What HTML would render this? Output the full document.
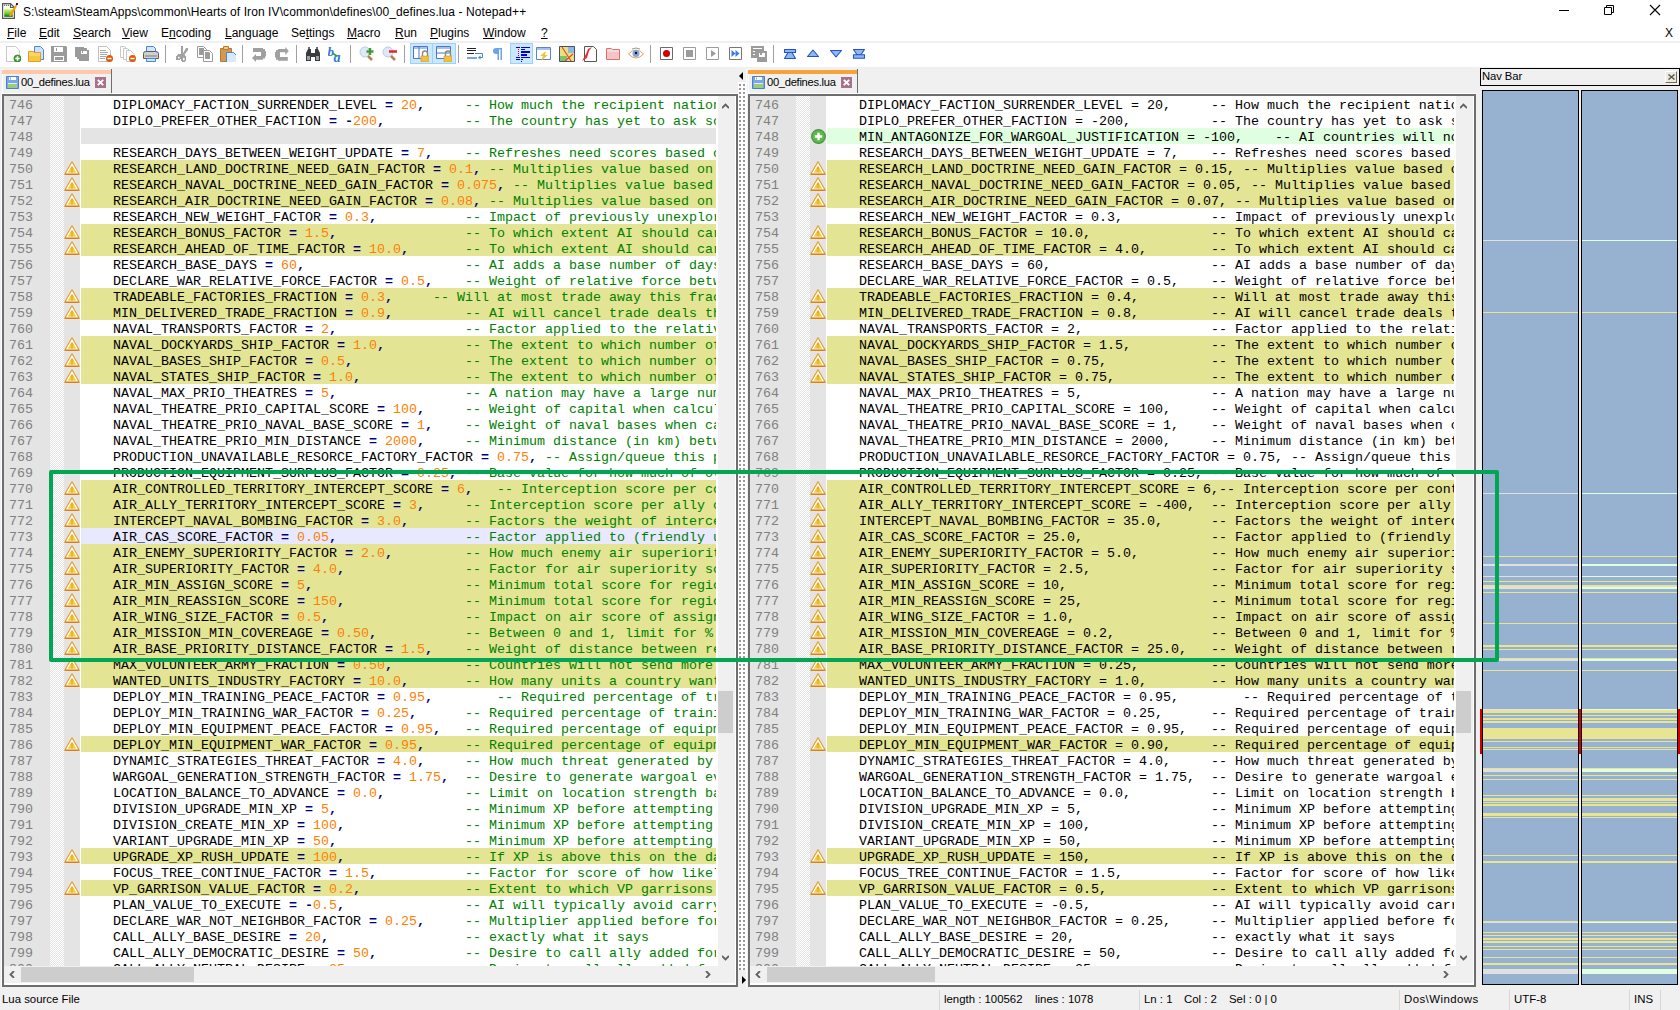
<!DOCTYPE html><html><head><meta charset="utf-8"><style>*{margin:0;padding:0;box-sizing:border-box}
html,body{width:1680px;height:1010px;overflow:hidden;background:#fff;position:relative;font-family:"Liberation Sans",sans-serif}
.a{position:absolute}
.ui{position:absolute;font-family:"Liberation Sans",sans-serif;font-size:12px;color:#000;white-space:pre;line-height:14px}
.menu u{text-decoration:underline;text-underline-offset:1px;text-decoration-thickness:1px}
.st2{font-size:11.4px}
.frame{position:absolute;border:2px solid #6e6e6e}
.lnm{position:absolute;background:#e4e4e4}
.hatch{position:absolute;background-color:#fff;background-image:linear-gradient(45deg,#e4e4e4 25%,transparent 25%,transparent 75%,#e4e4e4 75%),linear-gradient(45deg,#e4e4e4 25%,transparent 25%,transparent 75%,#e4e4e4 75%);background-size:2px 2px;background-position:0 0,1px 1px}
.clip{position:absolute;overflow:hidden;background:#fff}
.row{position:absolute;left:1px;right:0;height:16px}
.row.y{background:#e4e495}
.row.g{background:#e4e4e4}
.row.a{background:#e0ffe0}
.row.cur{background:#e8e8ff}
.t{position:absolute;left:32px;top:2px;font-family:"Liberation Mono",monospace;font-size:13.333px;line-height:16px;white-space:pre;color:#000}
.t i{font-style:normal}
.t .n{color:#ff8000}
.t .c{color:#008000}
.t .o{color:#000080;font-weight:bold}
.nums{position:absolute;font-family:"Liberation Mono",monospace;font-size:13.333px;line-height:16px;white-space:pre;color:#808080}
.sb{position:absolute;background:#f0f0f0}
.nav{position:absolute;background:#97b1d1;border:1px solid #000}
.st{position:absolute;height:1px}
</style></head><body><!-- title bar -->
<div class="a" style="left:0;top:0;width:1680px;height:41px;background:#fff"></div>
<div class="ui" style="left:23px;top:5px;font-size:12px;letter-spacing:0.09px">S:\steam\SteamApps\common\Hearts of Iron IV\common\defines\00_defines.lua - Notepad++</div>
<!-- menu -->
<div class="ui menu" style="left:7px;top:26px"><u>F</u>ile</div>
<div class="ui menu" style="left:39px;top:26px"><u>E</u>dit</div>
<div class="ui menu" style="left:73px;top:26px"><u>S</u>earch</div>
<div class="ui menu" style="left:122px;top:26px"><u>V</u>iew</div>
<div class="ui menu" style="left:161px;top:26px">E<u>n</u>coding</div>
<div class="ui menu" style="left:225px;top:26px"><u>L</u>anguage</div>
<div class="ui menu" style="left:291px;top:26px">Se<u>t</u>tings</div>
<div class="ui menu" style="left:347px;top:26px"><u>M</u>acro</div>
<div class="ui menu" style="left:395px;top:26px"><u>R</u>un</div>
<div class="ui menu" style="left:430px;top:26px"><u>P</u>lugins</div>
<div class="ui menu" style="left:483px;top:26px"><u>W</u>indow</div>
<div class="ui menu" style="left:541px;top:26px"><u>?</u></div>
<div class="ui" style="left:1665px;top:26px">X</div>
<div class="a" style="left:0;top:41px;width:1680px;height:2px;background:#f0f0f0"></div>
<!-- toolbar -->
<div class="a" style="left:0;top:43px;width:1680px;height:24px;background:#fff"></div>
<svg class="a" style="left:5px;top:46px" width="16" height="16" viewBox="0 0 16 16"><path d="M1.5 0.5h9l4 4v11h-13z" fill="#fff" stroke="#c8c8c8"/><circle cx="12.5" cy="12.5" r="3.6" fill="#3c9a2e" stroke="#2a7a1f" stroke-width=".6"/><path d="M12.5 10.3v4.4M10.3 12.5h4.4" stroke="#fff" stroke-width="1.6"/></svg><svg class="a" style="left:28px;top:46px" width="16" height="16" viewBox="0 0 16 16"><path d="M6.5 .5h6l3 3v10h-9z" fill="#cfe2fb" stroke="#4a86d8"/><path d="M.5 5.5h5l1 1h6v9h-12z" fill="#f9d46a" stroke="#e49a2a"/><path d="M1 10h11v5h-11z" fill="#f6c83a"/></svg><svg class="a" style="left:51px;top:46px" width="16" height="16" viewBox="0 0 16 16"><path d="M0 0h15l1 1v15h-16z" fill="#9b9b9b"/><path d="M3 1h9v5h-9z" fill="#fff"/><path d="M5 2h1v3h-1z" fill="#9b9b9b"/><path d="M3 10h10v5h-10z" fill="#fff"/><path d="M4 11h8v3h-8z" fill="#9b9b9b"/></svg><svg class="a" style="left:74px;top:46px" width="16" height="16" viewBox="0 0 16 16"><path d="M1 1h9v10h-9z" fill="#9b9b9b"/><path d="M3 2h10v11h-10z" fill="#9b9b9b"/><path d="M5 4h10v11h-10z" fill="#9b9b9b"/><path d="M7 5h6v3h-6z" fill="#fff"/><path d="M8 5h1v2h-1z" fill="#9b9b9b"/></svg><svg class="a" style="left:97px;top:46px" width="16" height="16" viewBox="0 0 16 16"><path d="M1.5 0.5h8l4 4v11h-12z" fill="#fff" stroke="#c0c0c0"/><path d="M3 4.5h6M3 6.5h8M3 8.5h7M3 10.5h6M3 12.5h5" stroke="#a8a8a8" stroke-width="1"/><circle cx="12.5" cy="12.5" r="3.5" fill="#e2570b"/><path d="M10.5 12.5h4" stroke="#fff" stroke-width="1.5"/></svg><svg class="a" style="left:120px;top:46px" width="16" height="16" viewBox="0 0 16 16"><path d="M0.5 0.5h4l4 4v7h-8z" fill="#fff" stroke="#c8c8c8"/><path d="M3.5 2.5h4l4 4v7h-8z" fill="#fff" stroke="#c8c8c8"/><path d="M6.5 4.5h4l4 4v7h-8z" fill="#fff" stroke="#c8c8c8"/><circle cx="12.5" cy="12.5" r="3.5" fill="#e2570b"/><path d="M10.5 12.5h4" stroke="#fff" stroke-width="1.5"/></svg><svg class="a" style="left:143px;top:46px" width="16" height="16" viewBox="0 0 16 16"><path d="M3.5 .5h7l2 2v5h-9z" fill="#d2e5fb" stroke="#4a86d8"/><path d="M.5 7.5q0-2 2-2h10q3 0 3 2v5h-15z" fill="#cfcfcf" stroke="#5a5a5a"/><path d="M2 9h12v2h-12z" fill="#a6a6a6"/><path d="M3.5 12.5h9v3h-9z" fill="#d2e5fb" stroke="#4a86d8"/></svg><svg class="a" style="left:172px;top:44px" width="20" height="20" viewBox="0 0 20 20"><g fill="#a0a0a0"><rect x="9" y="2" width="2" height="9"/><path d="M14 4h2v2l-4.5 6h-2z"/><path d="M6 10H10V11H13V12H14V17H13V18H10V17H9V15H8V16H4V12H5V11H6Z"/></g><rect x="6" y="12.8" width="1.6" height="1.6" fill="#fff"/><rect x="11" y="13.8" width="1.5" height="2.6" fill="#fff"/></svg><svg class="a" style="left:197px;top:46px" width="16" height="16" viewBox="0 0 16 16"><path d="M0.5 0.5h6l3 3v8h-9z" fill="#fff" stroke="#9b9b9b"/><path d="M2 2h5v7h-5z" fill="#9b9b9b"/><path d="M6.5 4.5h6l3 3v8h-9z" fill="#fff" stroke="#9b9b9b"/><path d="M8 6h4l1 1v6h-5z" fill="#9b9b9b"/></svg><svg class="a" style="left:220px;top:46px" width="16" height="16" viewBox="0 0 16 16"><path d="M.5 2.5h11v13h-11z" fill="#d09a55" stroke="#b57a33"/><path d="M3.5 .5h5v3h-5z" fill="#f0c878" stroke="#b57a33"/><path d="M6.5 6.5h7l3 3v7h-10z" fill="#dbe9fc" stroke="#4a86d8"/></svg><svg class="a" style="left:249px;top:44px" width="20" height="20" viewBox="0 0 20 20"><path d="M4 4H14V5H16V7H17V12.6H16V14.6H14V15.8H7V18L3 14L7 10V12H12V8H4Z" fill="#a0a0a0"/></svg><svg class="a" style="left:272px;top:44px" width="20" height="20" viewBox="0 0 20 20"><path d="M13.3 3L16.8 7L13.3 11V8.3H8V13H15.8V16.8H6V15.8H4V13.6H3V8H4V6H6V5H13.3Z" fill="#a0a0a0"/></svg><svg class="a" style="left:305px;top:46px" width="16" height="16" viewBox="0 0 16 16"><path d="M1 7l2-4h3v12h-5z M15 7l-2-4h-3v12h5z" fill="#3b3b3b"/><path d="M6 7h4v4h-4z" fill="#3b3b3b"/><path d="M3 1h2v2h-2z M11 1h2v2h-2z" fill="#6c6c6c"/><path d="M2 10h3v4h-3z M11 10h3v4h-3z" fill="#9aa0a8"/></svg><svg class="a" style="left:328px;top:46px" width="16" height="16" viewBox="0 0 16 16"><text x="-0.5" y="9.5" font-family="Liberation Serif" font-style="italic" font-weight="bold" font-size="13" fill="#2f79db">b</text><text x="5.5" y="16" font-family="Liberation Serif" font-style="italic" font-weight="bold" font-size="14" fill="#2f79db">a</text><path d="M5 7.5l4.5 3" stroke="#3a9a3a" stroke-width="1.6"/></svg><svg class="a" style="left:359px;top:46px" width="16" height="16" viewBox="0 0 16 16"><circle cx="6" cy="6" r="5" fill="#dde9f7" stroke="#b9cde6"/><path d="M9 10l4 4" stroke="#b5834c" stroke-width="2.5"/><path d="M11 2v7M7.5 5.5h7" stroke="#3f9a35" stroke-width="2.5"/></svg><svg class="a" style="left:382px;top:46px" width="16" height="16" viewBox="0 0 16 16"><circle cx="6" cy="6" r="5" fill="#dde9f7" stroke="#b9cde6"/><path d="M9 10l4 4" stroke="#b5834c" stroke-width="2.5"/><path d="M7 5.5h8" stroke="#e8202a" stroke-width="2.5"/></svg><div class="a" style="left:410px;top:43px;width:23px;height:21px;background:#cce8ff;border:1px solid #99d1ff"></div><div class="a" style="left:432px;top:43px;width:24px;height:21px;border-left-width:2px;background:#cce8ff;border:1px solid #99d1ff"></div><svg class="a" style="left:413px;top:46px" width="16" height="16" viewBox="0 0 16 16"><path d="M.5 .5h14v12h-14z" fill="#fff" stroke="#4c74c8"/><path d="M1 1h13v2h-13z" fill="#a9c1ea"/><path d="M6 1v12" stroke="#4c74c8"/><path d="M9.5 10v-2.5q0-2.5 2.5-2.5t2.5 2.5v2.5" fill="none" stroke="#8a8a8a" stroke-width="1.4"/><path d="M8 10h8v6h-8z" fill="#f0c040" stroke="#d09a20" stroke-width=".6"/></svg><svg class="a" style="left:436px;top:46px" width="16" height="16" viewBox="0 0 16 16"><path d="M.5 .5h14v12h-14z" fill="#fff" stroke="#4c74c8"/><path d="M1 1h13v2h-13z" fill="#a9c1ea"/><path d="M1 7h13" stroke="#4c74c8"/><path d="M9.5 10v-2.5q0-2.5 2.5-2.5t2.5 2.5v2.5" fill="none" stroke="#8a8a8a" stroke-width="1.4"/><path d="M8 10h8v6h-8z" fill="#f0c040" stroke="#d09a20" stroke-width=".6"/></svg><svg class="a" style="left:467px;top:46px" width="16" height="16" viewBox="0 0 16 16"><path d="M0 2.5h9M0 4.5h9M0 7.5h7" stroke="#222" stroke-width="1"/><path d="M8 7.5h7.5v4h-3" fill="none" stroke="#4c84d8" stroke-width="1"/><path d="M11 11.5l2.5-2v4z" fill="#4c84d8"/><path d="M0 11h10v2h-10z" fill="#79a8ea"/></svg><svg class="a" style="left:490px;top:46px" width="16" height="16" viewBox="0 0 16 16"><path d="M6 2h6v12h-1.5v-10.5h-1.5v10.5h-1.5v-6h-1.5q-3 0-3-3t3-3z" fill="#6fa2e8"/></svg><div class="a" style="left:510px;top:43px;width:23px;height:21px;background:#cce8ff;border:1px solid #99d1ff"></div><svg class="a" style="left:512px;top:45px" width="18" height="18" viewBox="0 0 18 18"><g fill="#0000e0"><rect x="4" y="2" width="4" height="1"/><rect x="9" y="2" width="9" height="1"/><rect x="9" y="4" width="4" height="1"/><rect x="9" y="6" width="9" height="2"/><rect x="9" y="9" width="6" height="2"/><rect x="4" y="12" width="4" height="1"/><rect x="9" y="12" width="9" height="1"/><rect x="4" y="14" width="4" height="1"/><rect x="9" y="14" width="2" height="1"/><rect x="9" y="16" width="1" height="1"/></g><g fill="#e00000"><rect x="6" y="4" width="1" height="1"/><rect x="6" y="6" width="1" height="1"/><rect x="6" y="8" width="1" height="1"/><rect x="6" y="10" width="1" height="1"/></g></svg><svg class="a" style="left:536px;top:46px" width="16" height="16" viewBox="0 0 16 16"><path d="M.5 1.5h14v12h-14z" fill="#fff" stroke="#5b83c9"/><path d="M1 2h13v2h-13z" fill="#a9c1ea"/><path d="M10 5l-6 5h3l-2 5 7-6h-3z" fill="#f2c23a"/></svg><svg class="a" style="left:559px;top:46px" width="16" height="16" viewBox="0 0 16 16"><path d="M.5 .5h15v15h-15z" fill="#e9e27a" stroke="#4d4d6a"/><path d="M9 1h6v6h-6z" fill="#8fb8e8"/><path d="M1 10h7v5h-7z" fill="#7cc46a"/><path d="M3 1l9 14M6 15l8-7" stroke="#e2473a" stroke-width="1.2"/></svg><svg class="a" style="left:582px;top:46px" width="16" height="16" viewBox="0 0 16 16"><path d="M2.5 .5h9l3 3v12h-12z" fill="#fff" stroke="#555"/><path d="M0 15l4-7 2-5 4-2-3 4-2 7z" fill="#e43030"/></svg><svg class="a" style="left:606px;top:46px" width="16" height="16" viewBox="0 0 16 16"><path d="M.5 2.5h5l1 1h7v10h-13z" fill="#f7d9d9" stroke="#d87070"/><path d="M1 6h12v7h-12z" fill="#f2c4c4"/></svg><svg class="a" style="left:628px;top:46px" width="16" height="16" viewBox="0 0 16 16"><path d="M.5 8q7.5-8 15 0q-7.5 8-15 0z" fill="#fff" stroke="#e0a060"/><circle cx="8" cy="7.5" r="3.5" fill="#7fa8df"/><circle cx="8" cy="7" r="1.2" fill="#111"/><path d="M4 3q4-2 8 0" stroke="#999" fill="none"/></svg><svg class="a" style="left:659px;top:45px" width="16" height="16" viewBox="0 0 16 16"><path d="M1.5 2.5h12v12h-12z" fill="#fff" stroke="#6a6a6a"/><circle cx="7.5" cy="8.5" r="3.5" fill="#d00000"/></svg><svg class="a" style="left:682px;top:45px" width="16" height="16" viewBox="0 0 16 16"><path d="M1.5 2.5h12v12h-12z" fill="#fff" stroke="#9b9b9b"/><path d="M4 5h7v7h-7z" fill="#9b9b9b"/></svg><svg class="a" style="left:705px;top:45px" width="16" height="16" viewBox="0 0 16 16"><path d="M1.5 2.5h12v12h-12z" fill="#fff" stroke="#9b9b9b"/><path d="M6 5l5 3.5-5 3.5z" fill="#9b9b9b"/></svg><svg class="a" style="left:728px;top:45px" width="16" height="16" viewBox="0 0 16 16"><path d="M1.5 2.5h12v12h-12z" fill="#fff" stroke="#777"/><path d="M3.5 5l4 3.5-4 3.5z M7.5 5l4 3.5-4 3.5z" fill="#3d7ce0"/></svg><svg class="a" style="left:751px;top:46px" width="16" height="16" viewBox="0 0 16 16"><path d="M0 0h13v12h-13z" fill="#9b9b9b"/><path d="M2 2h9v1h-9z M2 5h2v1h-2z M2 8h2v1h-2z" fill="#fff"/><path d="M6 5h10v11h-10z" fill="#9b9b9b"/><path d="M8 7h6v4h-6z" fill="#fff"/><path d="M9 7h2v2h-2z" fill="#9b9b9b"/></svg><svg class="a" style="left:783px;top:46px" width="14" height="16" viewBox="0 0 14 16"><path d="M1.5 3.5h11v3h-11z" fill="#93b6ee" stroke="#1f55cc" stroke-width="1.1" stroke-linejoin="round"/><path d="M5 6.5h4l3.5 6h-11z" fill="#93b6ee" stroke="#1f55cc" stroke-width="1.1" stroke-linejoin="round"/></svg><svg class="a" style="left:806px;top:46px" width="14" height="16" viewBox="0 0 14 16"><path d="M7 4l5.5 6.5h-11z" fill="#93b6ee" stroke="#1f55cc" stroke-width="1.1" stroke-linejoin="round"/></svg><svg class="a" style="left:829px;top:46px" width="14" height="16" viewBox="0 0 14 16"><path d="M1.5 4.5h11l-5.5 6.5z" fill="#93b6ee" stroke="#1f55cc" stroke-width="1.1" stroke-linejoin="round"/></svg><svg class="a" style="left:852px;top:46px" width="14" height="16" viewBox="0 0 14 16"><path d="M1.5 3.5h11l-3.5 5.3h-4z" fill="#93b6ee" stroke="#1f55cc" stroke-width="1.1" stroke-linejoin="round"/><path d="M1.5 8.8h11v3.5h-11z" fill="#93b6ee" stroke="#1f55cc" stroke-width="1.1" stroke-linejoin="round"/></svg><div class="a" style="left:165px;top:45px;width:1px;height:18px;background:#a0a0a0"></div><div class="a" style="left:242px;top:45px;width:1px;height:18px;background:#a0a0a0"></div><div class="a" style="left:296px;top:45px;width:1px;height:18px;background:#a0a0a0"></div><div class="a" style="left:350px;top:45px;width:1px;height:18px;background:#a0a0a0"></div><div class="a" style="left:404px;top:45px;width:1px;height:18px;background:#a0a0a0"></div><div class="a" style="left:458px;top:45px;width:1px;height:18px;background:#a0a0a0"></div><div class="a" style="left:650px;top:45px;width:1px;height:18px;background:#a0a0a0"></div><div class="a" style="left:773px;top:45px;width:1px;height:18px;background:#a0a0a0"></div>
<!-- gray area -->
<div class="a" style="left:0;top:67px;width:1680px;height:943px;background:#f0f0f0"></div>
<!-- tabs -->
<div class="a" style="left:2px;top:69px;width:110px;height:25px;background:#f0f0f0;border-right:1px solid #6e6e6e;border-left:1px solid #fff"></div><div class="a" style="left:2px;top:70px;width:109px;height:4px;background:#ffc8a8"></div><svg class="a" style="left:6px;top:76px" width="13" height="13" viewBox="0 0 13 13"><path d="M.5 .5h12v12h-12z" fill="#7aa7e6" stroke="#4a7fd0"/><path d="M3 1h7v3h-7z" fill="#fff"/><path d="M4 1.5h1v2h-1z" fill="#7aa7e6"/><path d="M2 8h9v4h-9z" fill="#9ccc78"/><path d="M2 7h9v1h-9z" fill="#dfeaf8"/></svg><div class="ui" style="left:21px;top:75px;font-size:11.2px;letter-spacing:-0.3px">00_defines.lua</div><svg class="a" style="left:95px;top:77px" width="11" height="11" viewBox="0 0 11 11"><path d="M0 0h11v11h-11z" fill="#a6728c"/><path d="M2.8 2.8l5.4 5.4M8.2 2.8l-5.4 5.4" stroke="#fff" stroke-width="1.9"/></svg><div class="a" style="left:748px;top:69px;width:110px;height:25px;background:#f0f0f0;border-right:1px solid #6e6e6e;border-left:1px solid #fff"></div><div class="a" style="left:748px;top:70px;width:109px;height:4px;background:#faa23a"></div><svg class="a" style="left:752px;top:76px" width="13" height="13" viewBox="0 0 13 13"><path d="M.5 .5h12v12h-12z" fill="#7aa7e6" stroke="#4a7fd0"/><path d="M3 1h7v3h-7z" fill="#fff"/><path d="M4 1.5h1v2h-1z" fill="#7aa7e6"/><path d="M2 8h9v4h-9z" fill="#9ccc78"/><path d="M2 7h9v1h-9z" fill="#dfeaf8"/></svg><div class="ui" style="left:767px;top:75px;font-size:11.2px;letter-spacing:-0.3px">00_defines.lua</div><svg class="a" style="left:841px;top:77px" width="11" height="11" viewBox="0 0 11 11"><path d="M0 0h11v11h-11z" fill="#a6728c"/><path d="M2.8 2.8l5.4 5.4M8.2 2.8l-5.4 5.4" stroke="#fff" stroke-width="1.9"/></svg>
<!-- left frame -->
<div class="frame" style="left:2px;top:94px;width:736px;height:893px"></div>
<div class="lnm" style="left:4px;top:96px;width:76px;height:870px"></div>
<div class="hatch" style="left:50px;top:96px;width:14px;height:870px"></div>
<div class="a" style="left:80px;top:96px;width:638px;height:870px;background:#fff"></div><div class="clip" style="left:80px;top:96px;width:636px;height:870px"><div class="row " style="top:0px"><div class="t">DIPLOMACY_FACTION_SURRENDER_LEVEL <b class="o">=</b> <i class="n">20</i><b class="o">,</b>     <i class="c">-- How much the recipient nation losing</i></div></div><div class="row " style="top:16px"><div class="t">DIPLO_PREFER_OTHER_FACTION <b class="o">=</b> <b class="o">-</b><i class="n">200</i><b class="o">,</b>          <i class="c">-- The country has yet to ask some</i></div></div><div class="row g" style="top:32px"><div class="t"></div></div><div class="row " style="top:48px"><div class="t">RESEARCH_DAYS_BETWEEN_WEIGHT_UPDATE <b class="o">=</b> <i class="n">7</i><b class="o">,</b>    <i class="c">-- Refreshes need scores based on</i></div></div><div class="row y" style="top:64px"><div class="t">RESEARCH_LAND_DOCTRINE_NEED_GAIN_FACTOR <b class="o">=</b> <i class="n">0.1</i><b class="o">,</b> <i class="c">-- Multiplies value based on relative</i></div></div><div class="row y" style="top:80px"><div class="t">RESEARCH_NAVAL_DOCTRINE_NEED_GAIN_FACTOR <b class="o">=</b> <i class="n">0.075</i><b class="o">,</b> <i class="c">-- Multiplies value based on</i></div></div><div class="row y" style="top:96px"><div class="t">RESEARCH_AIR_DOCTRINE_NEED_GAIN_FACTOR <b class="o">=</b> <i class="n">0.08</i><b class="o">,</b> <i class="c">-- Multiplies value based on rel</i></div></div><div class="row " style="top:112px"><div class="t">RESEARCH_NEW_WEIGHT_FACTOR <b class="o">=</b> <i class="n">0.3</i><b class="o">,</b>           <i class="c">-- Impact of previously unexplored</i></div></div><div class="row y" style="top:128px"><div class="t">RESEARCH_BONUS_FACTOR <b class="o">=</b> <i class="n">1.5</i><b class="o">,</b>                <i class="c">-- To which extent AI should care</i></div></div><div class="row y" style="top:144px"><div class="t">RESEARCH_AHEAD_OF_TIME_FACTOR <b class="o">=</b> <i class="n">10.0</i><b class="o">,</b>       <i class="c">-- To which extent AI should care</i></div></div><div class="row " style="top:160px"><div class="t">RESEARCH_BASE_DAYS <b class="o">=</b> <i class="n">60</i><b class="o">,</b>                    <i class="c">-- AI adds a base number of days</i></div></div><div class="row " style="top:176px"><div class="t">DECLARE_WAR_RELATIVE_FORCE_FACTOR <b class="o">=</b> <i class="n">0.5</i><b class="o">,</b>    <i class="c">-- Weight of relative force between</i></div></div><div class="row y" style="top:192px"><div class="t">TRADEABLE_FACTORIES_FRACTION <b class="o">=</b> <i class="n">0.3</i><b class="o">,</b>     <i class="c">-- Will at most trade away this fraction</i></div></div><div class="row y" style="top:208px"><div class="t">MIN_DELIVERED_TRADE_FRACTION <b class="o">=</b> <i class="n">0.9</i><b class="o">,</b>         <i class="c">-- AI will cancel trade deals that</i></div></div><div class="row " style="top:224px"><div class="t">NAVAL_TRANSPORTS_FACTOR <b class="o">=</b> <i class="n">2</i><b class="o">,</b>                <i class="c">-- Factor applied to the relative</i></div></div><div class="row y" style="top:240px"><div class="t">NAVAL_DOCKYARDS_SHIP_FACTOR <b class="o">=</b> <i class="n">1.0</i><b class="o">,</b>          <i class="c">-- The extent to which number of</i></div></div><div class="row y" style="top:256px"><div class="t">NAVAL_BASES_SHIP_FACTOR <b class="o">=</b> <i class="n">0.5</i><b class="o">,</b>              <i class="c">-- The extent to which number of</i></div></div><div class="row y" style="top:272px"><div class="t">NAVAL_STATES_SHIP_FACTOR <b class="o">=</b> <i class="n">1.0</i><b class="o">,</b>             <i class="c">-- The extent to which number of</i></div></div><div class="row " style="top:288px"><div class="t">NAVAL_MAX_PRIO_THEATRES <b class="o">=</b> <i class="n">5</i><b class="o">,</b>                <i class="c">-- A nation may have a large number</i></div></div><div class="row " style="top:304px"><div class="t">NAVAL_THEATRE_PRIO_CAPITAL_SCORE <b class="o">=</b> <i class="n">100</i><b class="o">,</b>     <i class="c">-- Weight of capital when calculating</i></div></div><div class="row " style="top:320px"><div class="t">NAVAL_THEATRE_PRIO_NAVAL_BASE_SCORE <b class="o">=</b> <i class="n">1</i><b class="o">,</b>    <i class="c">-- Weight of naval bases when calc</i></div></div><div class="row " style="top:336px"><div class="t">NAVAL_THEATRE_PRIO_MIN_DISTANCE <b class="o">=</b> <i class="n">2000</i><b class="o">,</b>     <i class="c">-- Minimum distance (in km) between</i></div></div><div class="row " style="top:352px"><div class="t">PRODUCTION_UNAVAILABLE_RESORCE_FACTORY_FACTOR <b class="o">=</b> <i class="n">0.75</i><b class="o">,</b> <i class="c">-- Assign/queue this production</i></div></div><div class="row " style="top:368px"><div class="t">PRODUCTION_EQUIPMENT_SURPLUS_FACTOR <b class="o">=</b> <i class="n">0.25</i><b class="o">,</b> <i class="c">-- Base value for how much of over</i></div></div><div class="row y" style="top:384px"><div class="t">AIR_CONTROLLED_TERRITORY_INTERCEPT_SCORE <b class="o">=</b> <i class="n">6</i><b class="o">,</b>   <i class="c">-- Interception score per controlled</i></div></div><div class="row y" style="top:400px"><div class="t">AIR_ALLY_TERRITORY_INTERCEPT_SCORE <b class="o">=</b> <i class="n">3</i><b class="o">,</b>     <i class="c">-- Interception score per ally controlled</i></div></div><div class="row y" style="top:416px"><div class="t">INTERCEPT_NAVAL_BOMBING_FACTOR <b class="o">=</b> <i class="n">3.0</i><b class="o">,</b>       <i class="c">-- Factors the weight of intercepting</i></div></div><div class="row cur" style="top:432px"><div class="t">AIR_CAS_SCORE_FACTOR <b class="o">=</b> <i class="n">0.05</i><b class="o">,</b>                <i class="c">-- Factor applied to (friendly unit</i></div></div><div class="row y" style="top:448px"><div class="t">AIR_ENEMY_SUPERIORITY_FACTOR <b class="o">=</b> <i class="n">2.0</i><b class="o">,</b>         <i class="c">-- How much enemy air superiority</i></div></div><div class="row y" style="top:464px"><div class="t">AIR_SUPERIORITY_FACTOR <b class="o">=</b> <i class="n">4.0</i><b class="o">,</b>               <i class="c">-- Factor for air superiority score</i></div></div><div class="row y" style="top:480px"><div class="t">AIR_MIN_ASSIGN_SCORE <b class="o">=</b> <i class="n">5</i><b class="o">,</b>                   <i class="c">-- Minimum total score for region</i></div></div><div class="row y" style="top:496px"><div class="t">AIR_MIN_REASSIGN_SCORE <b class="o">=</b> <i class="n">150</i><b class="o">,</b>               <i class="c">-- Minimum total score for region</i></div></div><div class="row y" style="top:512px"><div class="t">AIR_WING_SIZE_FACTOR <b class="o">=</b> <i class="n">0.5</i><b class="o">,</b>                 <i class="c">-- Impact on air score of assigning</i></div></div><div class="row y" style="top:528px"><div class="t">AIR_MISSION_MIN_COVEREAGE <b class="o">=</b> <i class="n">0.50</i><b class="o">,</b>           <i class="c">-- Between 0 and 1, limit for % of</i></div></div><div class="row y" style="top:544px"><div class="t">AIR_BASE_PRIORITY_DISTANCE_FACTOR <b class="o">=</b> <i class="n">1.5</i><b class="o">,</b>    <i class="c">-- Weight of distance between region</i></div></div><div class="row y" style="top:560px"><div class="t">MAX_VOLUNTEER_ARMY_FRACTION <b class="o">=</b> <i class="n">0.50</i><b class="o">,</b>         <i class="c">-- Countries will not send more than</i></div></div><div class="row y" style="top:576px"><div class="t">WANTED_UNITS_INDUSTRY_FACTORY <b class="o">=</b> <i class="n">10.0</i><b class="o">,</b>       <i class="c">-- How many units a country wants</i></div></div><div class="row " style="top:592px"><div class="t">DEPLOY_MIN_TRAINING_PEACE_FACTOR <b class="o">=</b> <i class="n">0.95</i><b class="o">,</b>        <i class="c">-- Required percentage of training</i></div></div><div class="row " style="top:608px"><div class="t">DEPLOY_MIN_TRAINING_WAR_FACTOR <b class="o">=</b> <i class="n">0.25</i><b class="o">,</b>      <i class="c">-- Required percentage of training</i></div></div><div class="row " style="top:624px"><div class="t">DEPLOY_MIN_EQUIPMENT_PEACE_FACTOR <b class="o">=</b> <i class="n">0.95</i><b class="o">,</b>   <i class="c">-- Required percentage of equipment</i></div></div><div class="row y" style="top:640px"><div class="t">DEPLOY_MIN_EQUIPMENT_WAR_FACTOR <b class="o">=</b> <i class="n">0.95</i><b class="o">,</b>     <i class="c">-- Required percentage of equipment</i></div></div><div class="row " style="top:656px"><div class="t">DYNAMIC_STRATEGIES_THREAT_FACTOR <b class="o">=</b> <i class="n">4.0</i><b class="o">,</b>     <i class="c">-- How much threat generated by</i></div></div><div class="row " style="top:672px"><div class="t">WARGOAL_GENERATION_STRENGTH_FACTOR <b class="o">=</b> <i class="n">1.75</i><b class="o">,</b>  <i class="c">-- Desire to generate wargoal every</i></div></div><div class="row " style="top:688px"><div class="t">LOCATION_BALANCE_TO_ADVANCE <b class="o">=</b> <i class="n">0.0</i><b class="o">,</b>          <i class="c">-- Limit on location strength balance</i></div></div><div class="row " style="top:704px"><div class="t">DIVISION_UPGRADE_MIN_XP <b class="o">=</b> <i class="n">5</i><b class="o">,</b>                <i class="c">-- Minimum XP before attempting to</i></div></div><div class="row " style="top:720px"><div class="t">DIVISION_CREATE_MIN_XP <b class="o">=</b> <i class="n">100</i><b class="o">,</b>               <i class="c">-- Minimum XP before attempting to</i></div></div><div class="row " style="top:736px"><div class="t">VARIANT_UPGRADE_MIN_XP <b class="o">=</b> <i class="n">50</i><b class="o">,</b>                <i class="c">-- Minimum XP before attempting to</i></div></div><div class="row y" style="top:752px"><div class="t">UPGRADE_XP_RUSH_UPDATE <b class="o">=</b> <i class="n">100</i><b class="o">,</b>               <i class="c">-- If XP is above this on the daily</i></div></div><div class="row " style="top:768px"><div class="t">FOCUS_TREE_CONTINUE_FACTOR <b class="o">=</b> <i class="n">1.5</i><b class="o">,</b>           <i class="c">-- Factor for score of how likely</i></div></div><div class="row y" style="top:784px"><div class="t">VP_GARRISON_VALUE_FACTOR <b class="o">=</b> <i class="n">0.2</i><b class="o">,</b>             <i class="c">-- Extent to which VP garrisons are</i></div></div><div class="row " style="top:800px"><div class="t">PLAN_VALUE_TO_EXECUTE <b class="o">=</b> <b class="o">-</b><i class="n">0.5</i><b class="o">,</b>               <i class="c">-- AI will typically avoid carrying</i></div></div><div class="row " style="top:816px"><div class="t">DECLARE_WAR_NOT_NEIGHBOR_FACTOR <b class="o">=</b> <i class="n">0.25</i><b class="o">,</b>     <i class="c">-- Multiplier applied before force</i></div></div><div class="row " style="top:832px"><div class="t">CALL_ALLY_BASE_DESIRE <b class="o">=</b> <i class="n">20</i><b class="o">,</b>                 <i class="c">-- exactly what it says</i></div></div><div class="row " style="top:848px"><div class="t">CALL_ALLY_DEMOCRATIC_DESIRE <b class="o">=</b> <i class="n">50</i><b class="o">,</b>           <i class="c">-- Desire to call ally added for</i></div></div><div class="row " style="top:864px"><div class="t">CALL_ALLY_NEUTRAL_DESIRE <b class="o">=</b> <i class="n">25</i><b class="o">,</b>              <i class="c">-- Desire to call ally added for</i></div></div></div>
<div class="nums" style="left:9px;top:98px;height:868px;overflow:hidden">746
747
748
749
750
751
752
753
754
755
756
757
758
759
760
761
762
763
764
765
766
767
768
769
770
771
772
773
774
775
776
777
778
779
780
781
782
783
784
785
786
787
788
789
790
791
792
793
794
795
796
797
798
799
800</div>
<div class="sb" style="left:718px;top:96px;width:17px;height:887px"></div>
<div class="sb" style="left:4px;top:966px;width:714px;height:17px"></div>
<!-- right frame -->
<div class="frame" style="left:748px;top:94px;width:728px;height:893px"></div>
<div class="lnm" style="left:750px;top:96px;width:76px;height:870px"></div>
<div class="hatch" style="left:796px;top:96px;width:14px;height:870px"></div>
<div class="a" style="left:826px;top:96px;width:630px;height:870px;background:#fff"></div><div class="clip" style="left:826px;top:96px;width:628px;height:870px"><div class="row " style="top:0px"><div class="t">DIPLOMACY_FACTION_SURRENDER_LEVEL = 20,     -- How much the recipient nation losing</div></div><div class="row " style="top:16px"><div class="t">DIPLO_PREFER_OTHER_FACTION = -200,          -- The country has yet to ask some</div></div><div class="row a" style="top:32px"><div class="t">MIN_ANTAGONIZE_FOR_WARGOAL_JUSTIFICATION = -100,    -- AI countries will not</div></div><div class="row " style="top:48px"><div class="t">RESEARCH_DAYS_BETWEEN_WEIGHT_UPDATE = 7,    -- Refreshes need scores based on</div></div><div class="row y" style="top:64px"><div class="t">RESEARCH_LAND_DOCTRINE_NEED_GAIN_FACTOR = 0.15, -- Multiplies value based on relative</div></div><div class="row y" style="top:80px"><div class="t">RESEARCH_NAVAL_DOCTRINE_NEED_GAIN_FACTOR = 0.05, -- Multiplies value based on</div></div><div class="row y" style="top:96px"><div class="t">RESEARCH_AIR_DOCTRINE_NEED_GAIN_FACTOR = 0.07, -- Multiplies value based on rel</div></div><div class="row " style="top:112px"><div class="t">RESEARCH_NEW_WEIGHT_FACTOR = 0.3,           -- Impact of previously unexplored</div></div><div class="row y" style="top:128px"><div class="t">RESEARCH_BONUS_FACTOR = 10.0,               -- To which extent AI should care</div></div><div class="row y" style="top:144px"><div class="t">RESEARCH_AHEAD_OF_TIME_FACTOR = 4.0,        -- To which extent AI should care</div></div><div class="row " style="top:160px"><div class="t">RESEARCH_BASE_DAYS = 60,                    -- AI adds a base number of days</div></div><div class="row " style="top:176px"><div class="t">DECLARE_WAR_RELATIVE_FORCE_FACTOR = 0.5,    -- Weight of relative force between</div></div><div class="row y" style="top:192px"><div class="t">TRADEABLE_FACTORIES_FRACTION = 0.4,         -- Will at most trade away this fraction</div></div><div class="row y" style="top:208px"><div class="t">MIN_DELIVERED_TRADE_FRACTION = 0.8,         -- AI will cancel trade deals that</div></div><div class="row " style="top:224px"><div class="t">NAVAL_TRANSPORTS_FACTOR = 2,                -- Factor applied to the relative</div></div><div class="row y" style="top:240px"><div class="t">NAVAL_DOCKYARDS_SHIP_FACTOR = 1.5,          -- The extent to which number of</div></div><div class="row y" style="top:256px"><div class="t">NAVAL_BASES_SHIP_FACTOR = 0.75,             -- The extent to which number of</div></div><div class="row y" style="top:272px"><div class="t">NAVAL_STATES_SHIP_FACTOR = 0.75,            -- The extent to which number of</div></div><div class="row " style="top:288px"><div class="t">NAVAL_MAX_PRIO_THEATRES = 5,                -- A nation may have a large number</div></div><div class="row " style="top:304px"><div class="t">NAVAL_THEATRE_PRIO_CAPITAL_SCORE = 100,     -- Weight of capital when calculating</div></div><div class="row " style="top:320px"><div class="t">NAVAL_THEATRE_PRIO_NAVAL_BASE_SCORE = 1,    -- Weight of naval bases when calc</div></div><div class="row " style="top:336px"><div class="t">NAVAL_THEATRE_PRIO_MIN_DISTANCE = 2000,     -- Minimum distance (in km) between</div></div><div class="row " style="top:352px"><div class="t">PRODUCTION_UNAVAILABLE_RESORCE_FACTORY_FACTOR = 0.75, -- Assign/queue this production</div></div><div class="row " style="top:368px"><div class="t">PRODUCTION_EQUIPMENT_SURPLUS_FACTOR = 0.25, -- Base value for how much of over</div></div><div class="row y" style="top:384px"><div class="t">AIR_CONTROLLED_TERRITORY_INTERCEPT_SCORE = 6,-- Interception score per controlled</div></div><div class="row y" style="top:400px"><div class="t">AIR_ALLY_TERRITORY_INTERCEPT_SCORE = -400,  -- Interception score per ally controlled</div></div><div class="row y" style="top:416px"><div class="t">INTERCEPT_NAVAL_BOMBING_FACTOR = 35.0,      -- Factors the weight of intercepting</div></div><div class="row y" style="top:432px"><div class="t">AIR_CAS_SCORE_FACTOR = 25.0,                -- Factor applied to (friendly unit</div></div><div class="row y" style="top:448px"><div class="t">AIR_ENEMY_SUPERIORITY_FACTOR = 5.0,         -- How much enemy air superiority</div></div><div class="row y" style="top:464px"><div class="t">AIR_SUPERIORITY_FACTOR = 2.5,               -- Factor for air superiority score</div></div><div class="row y" style="top:480px"><div class="t">AIR_MIN_ASSIGN_SCORE = 10,                  -- Minimum total score for region</div></div><div class="row y" style="top:496px"><div class="t">AIR_MIN_REASSIGN_SCORE = 25,                -- Minimum total score for region</div></div><div class="row y" style="top:512px"><div class="t">AIR_WING_SIZE_FACTOR = 1.0,                 -- Impact on air score of assigning</div></div><div class="row y" style="top:528px"><div class="t">AIR_MISSION_MIN_COVEREAGE = 0.2,            -- Between 0 and 1, limit for % of</div></div><div class="row y" style="top:544px"><div class="t">AIR_BASE_PRIORITY_DISTANCE_FACTOR = 25.0,   -- Weight of distance between region</div></div><div class="row y" style="top:560px"><div class="t">MAX_VOLUNTEER_ARMY_FRACTION = 0.25,         -- Countries will not send more than</div></div><div class="row y" style="top:576px"><div class="t">WANTED_UNITS_INDUSTRY_FACTORY = 1.0,        -- How many units a country wants</div></div><div class="row " style="top:592px"><div class="t">DEPLOY_MIN_TRAINING_PEACE_FACTOR = 0.95,        -- Required percentage of training</div></div><div class="row " style="top:608px"><div class="t">DEPLOY_MIN_TRAINING_WAR_FACTOR = 0.25,      -- Required percentage of training</div></div><div class="row " style="top:624px"><div class="t">DEPLOY_MIN_EQUIPMENT_PEACE_FACTOR = 0.95,   -- Required percentage of equipment</div></div><div class="row y" style="top:640px"><div class="t">DEPLOY_MIN_EQUIPMENT_WAR_FACTOR = 0.90,     -- Required percentage of equipment</div></div><div class="row " style="top:656px"><div class="t">DYNAMIC_STRATEGIES_THREAT_FACTOR = 4.0,     -- How much threat generated by</div></div><div class="row " style="top:672px"><div class="t">WARGOAL_GENERATION_STRENGTH_FACTOR = 1.75,  -- Desire to generate wargoal every</div></div><div class="row " style="top:688px"><div class="t">LOCATION_BALANCE_TO_ADVANCE = 0.0,          -- Limit on location strength balance</div></div><div class="row " style="top:704px"><div class="t">DIVISION_UPGRADE_MIN_XP = 5,                -- Minimum XP before attempting to</div></div><div class="row " style="top:720px"><div class="t">DIVISION_CREATE_MIN_XP = 100,               -- Minimum XP before attempting to</div></div><div class="row " style="top:736px"><div class="t">VARIANT_UPGRADE_MIN_XP = 50,                -- Minimum XP before attempting to</div></div><div class="row y" style="top:752px"><div class="t">UPGRADE_XP_RUSH_UPDATE = 150,               -- If XP is above this on the daily</div></div><div class="row " style="top:768px"><div class="t">FOCUS_TREE_CONTINUE_FACTOR = 1.5,           -- Factor for score of how likely</div></div><div class="row y" style="top:784px"><div class="t">VP_GARRISON_VALUE_FACTOR = 0.5,             -- Extent to which VP garrisons are</div></div><div class="row " style="top:800px"><div class="t">PLAN_VALUE_TO_EXECUTE = -0.5,               -- AI will typically avoid carrying</div></div><div class="row " style="top:816px"><div class="t">DECLARE_WAR_NOT_NEIGHBOR_FACTOR = 0.25,     -- Multiplier applied before force</div></div><div class="row " style="top:832px"><div class="t">CALL_ALLY_BASE_DESIRE = 20,                 -- exactly what it says</div></div><div class="row " style="top:848px"><div class="t">CALL_ALLY_DEMOCRATIC_DESIRE = 50,           -- Desire to call ally added for</div></div><div class="row " style="top:864px"><div class="t">CALL_ALLY_NEUTRAL_DESIRE = 25,              -- Desire to call ally added for</div></div></div>
<div class="nums" style="left:755px;top:98px;height:868px;overflow:hidden">746
747
748
749
750
751
752
753
754
755
756
757
758
759
760
761
762
763
764
765
766
767
768
769
770
771
772
773
774
775
776
777
778
779
780
781
782
783
784
785
786
787
788
789
790
791
792
793
794
795
796
797
798
799
800</div>
<div class="sb" style="left:1456px;top:96px;width:17px;height:887px"></div>
<div class="sb" style="left:750px;top:966px;width:706px;height:17px"></div>
<!-- nav bar -->
<div class="a" style="left:1480px;top:68px;width:200px;height:18px;border:1px solid #000;background:#f0f0f0"></div>
<div class="ui" style="left:1482px;top:69px;font-size:11.3px;letter-spacing:-0.1px">Nav Bar</div>
<div class="nav" style="left:1482px;top:90px;width:97px;height:895px"></div>
<div class="nav" style="left:1581px;top:90px;width:97px;height:895px"></div>
<div class="a" style="left:1483px;top:240px;width:95px;height:1px;background:#e0e0e0"></div><div class="a" style="left:1582px;top:240px;width:95px;height:1px;background:#e0ffe0"></div><div class="a" style="left:1483px;top:312px;width:95px;height:1px;background:#e8e494"></div><div class="a" style="left:1582px;top:312px;width:95px;height:1px;background:#e8e494"></div><div class="a" style="left:1483px;top:493px;width:95px;height:1px;background:#e0e0e0"></div><div class="a" style="left:1582px;top:493px;width:95px;height:1px;background:#e0ffe0"></div><div class="a" style="left:1483px;top:556px;width:95px;height:1px;background:#e8e494"></div><div class="a" style="left:1582px;top:556px;width:95px;height:1px;background:#e8e494"></div><div class="a" style="left:1483px;top:564px;width:95px;height:2px;background:#e0e0e0"></div><div class="a" style="left:1582px;top:564px;width:95px;height:2px;background:#e0ffe0"></div><div class="a" style="left:1483px;top:576px;width:95px;height:1px;background:#e0e0e0"></div><div class="a" style="left:1582px;top:576px;width:95px;height:1px;background:#e0ffe0"></div><div class="a" style="left:1483px;top:581px;width:95px;height:1px;background:#e8e494"></div><div class="a" style="left:1582px;top:581px;width:95px;height:1px;background:#e8e494"></div><div class="a" style="left:1483px;top:585px;width:95px;height:2px;background:#e8e494"></div><div class="a" style="left:1582px;top:585px;width:95px;height:2px;background:#e8e494"></div><div class="a" style="left:1483px;top:587px;width:95px;height:2px;background:#e0e0e0"></div><div class="a" style="left:1582px;top:587px;width:95px;height:2px;background:#e0ffe0"></div><div class="a" style="left:1483px;top:592px;width:95px;height:1px;background:#e8e494"></div><div class="a" style="left:1582px;top:592px;width:95px;height:1px;background:#e8e494"></div><div class="a" style="left:1483px;top:623px;width:95px;height:1px;background:#e8e494"></div><div class="a" style="left:1582px;top:623px;width:95px;height:1px;background:#e8e494"></div><div class="a" style="left:1483px;top:645px;width:95px;height:2px;background:#e8e494"></div><div class="a" style="left:1582px;top:645px;width:95px;height:2px;background:#e8e494"></div><div class="a" style="left:1483px;top:649px;width:95px;height:1px;background:#e8e494"></div><div class="a" style="left:1582px;top:649px;width:95px;height:1px;background:#e8e494"></div><div class="a" style="left:1483px;top:658px;width:95px;height:1px;background:#e8e494"></div><div class="a" style="left:1582px;top:658px;width:95px;height:1px;background:#e8e494"></div><div class="a" style="left:1483px;top:659px;width:95px;height:2px;background:#e0e0e0"></div><div class="a" style="left:1582px;top:659px;width:95px;height:2px;background:#e0ffe0"></div><div class="a" style="left:1483px;top:670px;width:95px;height:1px;background:#e8e494"></div><div class="a" style="left:1582px;top:670px;width:95px;height:1px;background:#e8e494"></div><div class="a" style="left:1483px;top:709px;width:95px;height:1px;background:#e0e0e0"></div><div class="a" style="left:1582px;top:709px;width:95px;height:1px;background:#e0ffe0"></div><div class="a" style="left:1483px;top:710px;width:95px;height:3px;background:#e8e494"></div><div class="a" style="left:1582px;top:710px;width:95px;height:3px;background:#e8e494"></div><div class="a" style="left:1483px;top:715px;width:95px;height:1px;background:#e8e494"></div><div class="a" style="left:1582px;top:715px;width:95px;height:1px;background:#e8e494"></div><div class="a" style="left:1483px;top:718px;width:95px;height:2px;background:#e8e494"></div><div class="a" style="left:1582px;top:718px;width:95px;height:2px;background:#e8e494"></div><div class="a" style="left:1483px;top:721px;width:95px;height:2px;background:#e8e494"></div><div class="a" style="left:1582px;top:721px;width:95px;height:2px;background:#e8e494"></div><div class="a" style="left:1483px;top:728px;width:95px;height:11px;background:#e8e494"></div><div class="a" style="left:1582px;top:728px;width:95px;height:11px;background:#e8e494"></div><div class="a" style="left:1483px;top:741px;width:95px;height:1px;background:#e8e494"></div><div class="a" style="left:1582px;top:741px;width:95px;height:1px;background:#e8e494"></div><div class="a" style="left:1483px;top:747px;width:95px;height:1px;background:#e8e494"></div><div class="a" style="left:1582px;top:747px;width:95px;height:1px;background:#e8e494"></div><div class="a" style="left:1483px;top:749px;width:95px;height:1px;background:#e8e494"></div><div class="a" style="left:1582px;top:749px;width:95px;height:1px;background:#e8e494"></div><div class="a" style="left:1483px;top:768px;width:95px;height:1px;background:#e8e494"></div><div class="a" style="left:1582px;top:768px;width:95px;height:1px;background:#e8e494"></div><div class="a" style="left:1483px;top:769px;width:95px;height:3px;background:#e0e0e0"></div><div class="a" style="left:1582px;top:769px;width:95px;height:3px;background:#e0ffe0"></div><div class="a" style="left:1483px;top:775px;width:95px;height:1px;background:#e8e494"></div><div class="a" style="left:1582px;top:775px;width:95px;height:1px;background:#e8e494"></div><div class="a" style="left:1483px;top:779px;width:95px;height:1px;background:#e8e494"></div><div class="a" style="left:1582px;top:779px;width:95px;height:1px;background:#e8e494"></div><div class="a" style="left:1483px;top:795px;width:95px;height:1px;background:#e8e494"></div><div class="a" style="left:1582px;top:795px;width:95px;height:1px;background:#e8e494"></div><div class="a" style="left:1483px;top:798px;width:95px;height:3px;background:#e8e494"></div><div class="a" style="left:1582px;top:798px;width:95px;height:3px;background:#e8e494"></div><div class="a" style="left:1483px;top:802px;width:95px;height:1px;background:#e8e494"></div><div class="a" style="left:1582px;top:802px;width:95px;height:1px;background:#e8e494"></div><div class="a" style="left:1483px;top:804px;width:95px;height:2px;background:#e8e494"></div><div class="a" style="left:1582px;top:804px;width:95px;height:2px;background:#e8e494"></div><div class="a" style="left:1483px;top:813px;width:95px;height:3px;background:#e8e494"></div><div class="a" style="left:1582px;top:813px;width:95px;height:3px;background:#e8e494"></div><div class="a" style="left:1483px;top:817px;width:95px;height:1px;background:#e8e494"></div><div class="a" style="left:1582px;top:817px;width:95px;height:1px;background:#e8e494"></div><div class="a" style="left:1483px;top:855px;width:95px;height:1px;background:#e8e494"></div><div class="a" style="left:1582px;top:855px;width:95px;height:1px;background:#e8e494"></div><div class="a" style="left:1483px;top:861px;width:95px;height:2px;background:#e8e494"></div><div class="a" style="left:1582px;top:861px;width:95px;height:2px;background:#e8e494"></div><div class="a" style="left:1483px;top:921px;width:95px;height:1px;background:#e8e494"></div><div class="a" style="left:1582px;top:921px;width:95px;height:1px;background:#e8e494"></div><div class="a" style="left:1483px;top:922px;width:95px;height:1px;background:#e0e0e0"></div><div class="a" style="left:1582px;top:922px;width:95px;height:1px;background:#e0ffe0"></div><div class="a" style="left:1483px;top:932px;width:95px;height:1px;background:#e8e494"></div><div class="a" style="left:1582px;top:932px;width:95px;height:1px;background:#e8e494"></div><div class="a" style="left:1483px;top:935px;width:95px;height:1px;background:#e8e494"></div><div class="a" style="left:1582px;top:935px;width:95px;height:1px;background:#e8e494"></div><div class="a" style="left:1483px;top:938px;width:95px;height:2px;background:#e8e494"></div><div class="a" style="left:1582px;top:938px;width:95px;height:2px;background:#e8e494"></div><div class="a" style="left:1483px;top:941px;width:95px;height:2px;background:#e8e494"></div><div class="a" style="left:1582px;top:941px;width:95px;height:2px;background:#e8e494"></div><div class="a" style="left:1483px;top:946px;width:95px;height:1px;background:#e8e494"></div><div class="a" style="left:1582px;top:946px;width:95px;height:1px;background:#e8e494"></div><div class="a" style="left:1483px;top:949px;width:95px;height:1px;background:#e8e494"></div><div class="a" style="left:1582px;top:949px;width:95px;height:1px;background:#e8e494"></div><div class="a" style="left:1483px;top:957px;width:95px;height:1px;background:#e8e494"></div><div class="a" style="left:1582px;top:957px;width:95px;height:1px;background:#e8e494"></div><div class="a" style="left:1483px;top:963px;width:95px;height:2px;background:#e8e494"></div><div class="a" style="left:1582px;top:963px;width:95px;height:2px;background:#e8e494"></div><div class="a" style="left:1483px;top:969px;width:95px;height:5px;background:#e0e0e0"></div><div class="a" style="left:1582px;top:969px;width:95px;height:5px;background:#e0ffe0"></div><div class="a" style="left:1480px;top:709px;width:2px;height:45px;background:#d00000"></div><div class="a" style="left:1579px;top:709px;width:2px;height:45px;background:#d00000"></div><div class="a" style="left:1678px;top:709px;width:2px;height:45px;background:#d00000"></div>
<!-- status bar -->
<div class="ui st2" style="left:2px;top:992px">Lua source File</div>
<div class="ui st2" style="left:944px;top:992px">length : 100562</div>
<div class="ui st2" style="left:1035px;top:992px">lines : 1078</div>
<div class="ui st2" style="left:1144px;top:992px">Ln : 1</div>
<div class="ui st2" style="left:1184px;top:992px">Col : 2</div>
<div class="ui st2" style="left:1229px;top:992px">Sel : 0 | 0</div>
<div class="ui st2" style="left:1404px;top:992px;letter-spacing:0.45px">Dos\Windows</div>
<div class="ui st2" style="left:1514px;top:992px">UTF-8</div>
<div class="ui st2" style="left:1634px;top:992px">INS</div>
<svg class="a" style="left:64px;top:161px" width="16" height="14" viewBox="0 0 16 14"><path d="M8 .8L15.3 13.2H.7z" fill="#fff" stroke="#e39a20" stroke-width="1.1" stroke-linejoin="round"/><path d="M1 13.2H15" stroke="#d07810" stroke-width="1.2"/><path d="M8 4.5L12.3 11.8H3.7z" fill="#f5cc40"/><path d="M7.4 6h1.2v3.6h-1.2zM7.4 10.2h1.2v1h-1.2z" fill="#d89a20"/></svg><svg class="a" style="left:64px;top:177px" width="16" height="14" viewBox="0 0 16 14"><path d="M8 .8L15.3 13.2H.7z" fill="#fff" stroke="#e39a20" stroke-width="1.1" stroke-linejoin="round"/><path d="M1 13.2H15" stroke="#d07810" stroke-width="1.2"/><path d="M8 4.5L12.3 11.8H3.7z" fill="#f5cc40"/><path d="M7.4 6h1.2v3.6h-1.2zM7.4 10.2h1.2v1h-1.2z" fill="#d89a20"/></svg><svg class="a" style="left:64px;top:193px" width="16" height="14" viewBox="0 0 16 14"><path d="M8 .8L15.3 13.2H.7z" fill="#fff" stroke="#e39a20" stroke-width="1.1" stroke-linejoin="round"/><path d="M1 13.2H15" stroke="#d07810" stroke-width="1.2"/><path d="M8 4.5L12.3 11.8H3.7z" fill="#f5cc40"/><path d="M7.4 6h1.2v3.6h-1.2zM7.4 10.2h1.2v1h-1.2z" fill="#d89a20"/></svg><svg class="a" style="left:64px;top:225px" width="16" height="14" viewBox="0 0 16 14"><path d="M8 .8L15.3 13.2H.7z" fill="#fff" stroke="#e39a20" stroke-width="1.1" stroke-linejoin="round"/><path d="M1 13.2H15" stroke="#d07810" stroke-width="1.2"/><path d="M8 4.5L12.3 11.8H3.7z" fill="#f5cc40"/><path d="M7.4 6h1.2v3.6h-1.2zM7.4 10.2h1.2v1h-1.2z" fill="#d89a20"/></svg><svg class="a" style="left:64px;top:241px" width="16" height="14" viewBox="0 0 16 14"><path d="M8 .8L15.3 13.2H.7z" fill="#fff" stroke="#e39a20" stroke-width="1.1" stroke-linejoin="round"/><path d="M1 13.2H15" stroke="#d07810" stroke-width="1.2"/><path d="M8 4.5L12.3 11.8H3.7z" fill="#f5cc40"/><path d="M7.4 6h1.2v3.6h-1.2zM7.4 10.2h1.2v1h-1.2z" fill="#d89a20"/></svg><svg class="a" style="left:64px;top:289px" width="16" height="14" viewBox="0 0 16 14"><path d="M8 .8L15.3 13.2H.7z" fill="#fff" stroke="#e39a20" stroke-width="1.1" stroke-linejoin="round"/><path d="M1 13.2H15" stroke="#d07810" stroke-width="1.2"/><path d="M8 4.5L12.3 11.8H3.7z" fill="#f5cc40"/><path d="M7.4 6h1.2v3.6h-1.2zM7.4 10.2h1.2v1h-1.2z" fill="#d89a20"/></svg><svg class="a" style="left:64px;top:305px" width="16" height="14" viewBox="0 0 16 14"><path d="M8 .8L15.3 13.2H.7z" fill="#fff" stroke="#e39a20" stroke-width="1.1" stroke-linejoin="round"/><path d="M1 13.2H15" stroke="#d07810" stroke-width="1.2"/><path d="M8 4.5L12.3 11.8H3.7z" fill="#f5cc40"/><path d="M7.4 6h1.2v3.6h-1.2zM7.4 10.2h1.2v1h-1.2z" fill="#d89a20"/></svg><svg class="a" style="left:64px;top:337px" width="16" height="14" viewBox="0 0 16 14"><path d="M8 .8L15.3 13.2H.7z" fill="#fff" stroke="#e39a20" stroke-width="1.1" stroke-linejoin="round"/><path d="M1 13.2H15" stroke="#d07810" stroke-width="1.2"/><path d="M8 4.5L12.3 11.8H3.7z" fill="#f5cc40"/><path d="M7.4 6h1.2v3.6h-1.2zM7.4 10.2h1.2v1h-1.2z" fill="#d89a20"/></svg><svg class="a" style="left:64px;top:353px" width="16" height="14" viewBox="0 0 16 14"><path d="M8 .8L15.3 13.2H.7z" fill="#fff" stroke="#e39a20" stroke-width="1.1" stroke-linejoin="round"/><path d="M1 13.2H15" stroke="#d07810" stroke-width="1.2"/><path d="M8 4.5L12.3 11.8H3.7z" fill="#f5cc40"/><path d="M7.4 6h1.2v3.6h-1.2zM7.4 10.2h1.2v1h-1.2z" fill="#d89a20"/></svg><svg class="a" style="left:64px;top:369px" width="16" height="14" viewBox="0 0 16 14"><path d="M8 .8L15.3 13.2H.7z" fill="#fff" stroke="#e39a20" stroke-width="1.1" stroke-linejoin="round"/><path d="M1 13.2H15" stroke="#d07810" stroke-width="1.2"/><path d="M8 4.5L12.3 11.8H3.7z" fill="#f5cc40"/><path d="M7.4 6h1.2v3.6h-1.2zM7.4 10.2h1.2v1h-1.2z" fill="#d89a20"/></svg><svg class="a" style="left:64px;top:481px" width="16" height="14" viewBox="0 0 16 14"><path d="M8 .8L15.3 13.2H.7z" fill="#fff" stroke="#e39a20" stroke-width="1.1" stroke-linejoin="round"/><path d="M1 13.2H15" stroke="#d07810" stroke-width="1.2"/><path d="M8 4.5L12.3 11.8H3.7z" fill="#f5cc40"/><path d="M7.4 6h1.2v3.6h-1.2zM7.4 10.2h1.2v1h-1.2z" fill="#d89a20"/></svg><svg class="a" style="left:64px;top:497px" width="16" height="14" viewBox="0 0 16 14"><path d="M8 .8L15.3 13.2H.7z" fill="#fff" stroke="#e39a20" stroke-width="1.1" stroke-linejoin="round"/><path d="M1 13.2H15" stroke="#d07810" stroke-width="1.2"/><path d="M8 4.5L12.3 11.8H3.7z" fill="#f5cc40"/><path d="M7.4 6h1.2v3.6h-1.2zM7.4 10.2h1.2v1h-1.2z" fill="#d89a20"/></svg><svg class="a" style="left:64px;top:513px" width="16" height="14" viewBox="0 0 16 14"><path d="M8 .8L15.3 13.2H.7z" fill="#fff" stroke="#e39a20" stroke-width="1.1" stroke-linejoin="round"/><path d="M1 13.2H15" stroke="#d07810" stroke-width="1.2"/><path d="M8 4.5L12.3 11.8H3.7z" fill="#f5cc40"/><path d="M7.4 6h1.2v3.6h-1.2zM7.4 10.2h1.2v1h-1.2z" fill="#d89a20"/></svg><svg class="a" style="left:64px;top:529px" width="16" height="14" viewBox="0 0 16 14"><path d="M8 .8L15.3 13.2H.7z" fill="#fff" stroke="#e39a20" stroke-width="1.1" stroke-linejoin="round"/><path d="M1 13.2H15" stroke="#d07810" stroke-width="1.2"/><path d="M8 4.5L12.3 11.8H3.7z" fill="#f5cc40"/><path d="M7.4 6h1.2v3.6h-1.2zM7.4 10.2h1.2v1h-1.2z" fill="#d89a20"/></svg><svg class="a" style="left:64px;top:545px" width="16" height="14" viewBox="0 0 16 14"><path d="M8 .8L15.3 13.2H.7z" fill="#fff" stroke="#e39a20" stroke-width="1.1" stroke-linejoin="round"/><path d="M1 13.2H15" stroke="#d07810" stroke-width="1.2"/><path d="M8 4.5L12.3 11.8H3.7z" fill="#f5cc40"/><path d="M7.4 6h1.2v3.6h-1.2zM7.4 10.2h1.2v1h-1.2z" fill="#d89a20"/></svg><svg class="a" style="left:64px;top:561px" width="16" height="14" viewBox="0 0 16 14"><path d="M8 .8L15.3 13.2H.7z" fill="#fff" stroke="#e39a20" stroke-width="1.1" stroke-linejoin="round"/><path d="M1 13.2H15" stroke="#d07810" stroke-width="1.2"/><path d="M8 4.5L12.3 11.8H3.7z" fill="#f5cc40"/><path d="M7.4 6h1.2v3.6h-1.2zM7.4 10.2h1.2v1h-1.2z" fill="#d89a20"/></svg><svg class="a" style="left:64px;top:577px" width="16" height="14" viewBox="0 0 16 14"><path d="M8 .8L15.3 13.2H.7z" fill="#fff" stroke="#e39a20" stroke-width="1.1" stroke-linejoin="round"/><path d="M1 13.2H15" stroke="#d07810" stroke-width="1.2"/><path d="M8 4.5L12.3 11.8H3.7z" fill="#f5cc40"/><path d="M7.4 6h1.2v3.6h-1.2zM7.4 10.2h1.2v1h-1.2z" fill="#d89a20"/></svg><svg class="a" style="left:64px;top:593px" width="16" height="14" viewBox="0 0 16 14"><path d="M8 .8L15.3 13.2H.7z" fill="#fff" stroke="#e39a20" stroke-width="1.1" stroke-linejoin="round"/><path d="M1 13.2H15" stroke="#d07810" stroke-width="1.2"/><path d="M8 4.5L12.3 11.8H3.7z" fill="#f5cc40"/><path d="M7.4 6h1.2v3.6h-1.2zM7.4 10.2h1.2v1h-1.2z" fill="#d89a20"/></svg><svg class="a" style="left:64px;top:609px" width="16" height="14" viewBox="0 0 16 14"><path d="M8 .8L15.3 13.2H.7z" fill="#fff" stroke="#e39a20" stroke-width="1.1" stroke-linejoin="round"/><path d="M1 13.2H15" stroke="#d07810" stroke-width="1.2"/><path d="M8 4.5L12.3 11.8H3.7z" fill="#f5cc40"/><path d="M7.4 6h1.2v3.6h-1.2zM7.4 10.2h1.2v1h-1.2z" fill="#d89a20"/></svg><svg class="a" style="left:64px;top:625px" width="16" height="14" viewBox="0 0 16 14"><path d="M8 .8L15.3 13.2H.7z" fill="#fff" stroke="#e39a20" stroke-width="1.1" stroke-linejoin="round"/><path d="M1 13.2H15" stroke="#d07810" stroke-width="1.2"/><path d="M8 4.5L12.3 11.8H3.7z" fill="#f5cc40"/><path d="M7.4 6h1.2v3.6h-1.2zM7.4 10.2h1.2v1h-1.2z" fill="#d89a20"/></svg><svg class="a" style="left:64px;top:641px" width="16" height="14" viewBox="0 0 16 14"><path d="M8 .8L15.3 13.2H.7z" fill="#fff" stroke="#e39a20" stroke-width="1.1" stroke-linejoin="round"/><path d="M1 13.2H15" stroke="#d07810" stroke-width="1.2"/><path d="M8 4.5L12.3 11.8H3.7z" fill="#f5cc40"/><path d="M7.4 6h1.2v3.6h-1.2zM7.4 10.2h1.2v1h-1.2z" fill="#d89a20"/></svg><svg class="a" style="left:64px;top:657px" width="16" height="14" viewBox="0 0 16 14"><path d="M8 .8L15.3 13.2H.7z" fill="#fff" stroke="#e39a20" stroke-width="1.1" stroke-linejoin="round"/><path d="M1 13.2H15" stroke="#d07810" stroke-width="1.2"/><path d="M8 4.5L12.3 11.8H3.7z" fill="#f5cc40"/><path d="M7.4 6h1.2v3.6h-1.2zM7.4 10.2h1.2v1h-1.2z" fill="#d89a20"/></svg><svg class="a" style="left:64px;top:673px" width="16" height="14" viewBox="0 0 16 14"><path d="M8 .8L15.3 13.2H.7z" fill="#fff" stroke="#e39a20" stroke-width="1.1" stroke-linejoin="round"/><path d="M1 13.2H15" stroke="#d07810" stroke-width="1.2"/><path d="M8 4.5L12.3 11.8H3.7z" fill="#f5cc40"/><path d="M7.4 6h1.2v3.6h-1.2zM7.4 10.2h1.2v1h-1.2z" fill="#d89a20"/></svg><svg class="a" style="left:64px;top:737px" width="16" height="14" viewBox="0 0 16 14"><path d="M8 .8L15.3 13.2H.7z" fill="#fff" stroke="#e39a20" stroke-width="1.1" stroke-linejoin="round"/><path d="M1 13.2H15" stroke="#d07810" stroke-width="1.2"/><path d="M8 4.5L12.3 11.8H3.7z" fill="#f5cc40"/><path d="M7.4 6h1.2v3.6h-1.2zM7.4 10.2h1.2v1h-1.2z" fill="#d89a20"/></svg><svg class="a" style="left:64px;top:849px" width="16" height="14" viewBox="0 0 16 14"><path d="M8 .8L15.3 13.2H.7z" fill="#fff" stroke="#e39a20" stroke-width="1.1" stroke-linejoin="round"/><path d="M1 13.2H15" stroke="#d07810" stroke-width="1.2"/><path d="M8 4.5L12.3 11.8H3.7z" fill="#f5cc40"/><path d="M7.4 6h1.2v3.6h-1.2zM7.4 10.2h1.2v1h-1.2z" fill="#d89a20"/></svg><svg class="a" style="left:64px;top:881px" width="16" height="14" viewBox="0 0 16 14"><path d="M8 .8L15.3 13.2H.7z" fill="#fff" stroke="#e39a20" stroke-width="1.1" stroke-linejoin="round"/><path d="M1 13.2H15" stroke="#d07810" stroke-width="1.2"/><path d="M8 4.5L12.3 11.8H3.7z" fill="#f5cc40"/><path d="M7.4 6h1.2v3.6h-1.2zM7.4 10.2h1.2v1h-1.2z" fill="#d89a20"/></svg><svg class="a" style="left:810px;top:161px" width="16" height="14" viewBox="0 0 16 14"><path d="M8 .8L15.3 13.2H.7z" fill="#fff" stroke="#e39a20" stroke-width="1.1" stroke-linejoin="round"/><path d="M1 13.2H15" stroke="#d07810" stroke-width="1.2"/><path d="M8 4.5L12.3 11.8H3.7z" fill="#f5cc40"/><path d="M7.4 6h1.2v3.6h-1.2zM7.4 10.2h1.2v1h-1.2z" fill="#d89a20"/></svg><svg class="a" style="left:810px;top:177px" width="16" height="14" viewBox="0 0 16 14"><path d="M8 .8L15.3 13.2H.7z" fill="#fff" stroke="#e39a20" stroke-width="1.1" stroke-linejoin="round"/><path d="M1 13.2H15" stroke="#d07810" stroke-width="1.2"/><path d="M8 4.5L12.3 11.8H3.7z" fill="#f5cc40"/><path d="M7.4 6h1.2v3.6h-1.2zM7.4 10.2h1.2v1h-1.2z" fill="#d89a20"/></svg><svg class="a" style="left:810px;top:193px" width="16" height="14" viewBox="0 0 16 14"><path d="M8 .8L15.3 13.2H.7z" fill="#fff" stroke="#e39a20" stroke-width="1.1" stroke-linejoin="round"/><path d="M1 13.2H15" stroke="#d07810" stroke-width="1.2"/><path d="M8 4.5L12.3 11.8H3.7z" fill="#f5cc40"/><path d="M7.4 6h1.2v3.6h-1.2zM7.4 10.2h1.2v1h-1.2z" fill="#d89a20"/></svg><svg class="a" style="left:810px;top:225px" width="16" height="14" viewBox="0 0 16 14"><path d="M8 .8L15.3 13.2H.7z" fill="#fff" stroke="#e39a20" stroke-width="1.1" stroke-linejoin="round"/><path d="M1 13.2H15" stroke="#d07810" stroke-width="1.2"/><path d="M8 4.5L12.3 11.8H3.7z" fill="#f5cc40"/><path d="M7.4 6h1.2v3.6h-1.2zM7.4 10.2h1.2v1h-1.2z" fill="#d89a20"/></svg><svg class="a" style="left:810px;top:241px" width="16" height="14" viewBox="0 0 16 14"><path d="M8 .8L15.3 13.2H.7z" fill="#fff" stroke="#e39a20" stroke-width="1.1" stroke-linejoin="round"/><path d="M1 13.2H15" stroke="#d07810" stroke-width="1.2"/><path d="M8 4.5L12.3 11.8H3.7z" fill="#f5cc40"/><path d="M7.4 6h1.2v3.6h-1.2zM7.4 10.2h1.2v1h-1.2z" fill="#d89a20"/></svg><svg class="a" style="left:810px;top:289px" width="16" height="14" viewBox="0 0 16 14"><path d="M8 .8L15.3 13.2H.7z" fill="#fff" stroke="#e39a20" stroke-width="1.1" stroke-linejoin="round"/><path d="M1 13.2H15" stroke="#d07810" stroke-width="1.2"/><path d="M8 4.5L12.3 11.8H3.7z" fill="#f5cc40"/><path d="M7.4 6h1.2v3.6h-1.2zM7.4 10.2h1.2v1h-1.2z" fill="#d89a20"/></svg><svg class="a" style="left:810px;top:305px" width="16" height="14" viewBox="0 0 16 14"><path d="M8 .8L15.3 13.2H.7z" fill="#fff" stroke="#e39a20" stroke-width="1.1" stroke-linejoin="round"/><path d="M1 13.2H15" stroke="#d07810" stroke-width="1.2"/><path d="M8 4.5L12.3 11.8H3.7z" fill="#f5cc40"/><path d="M7.4 6h1.2v3.6h-1.2zM7.4 10.2h1.2v1h-1.2z" fill="#d89a20"/></svg><svg class="a" style="left:810px;top:337px" width="16" height="14" viewBox="0 0 16 14"><path d="M8 .8L15.3 13.2H.7z" fill="#fff" stroke="#e39a20" stroke-width="1.1" stroke-linejoin="round"/><path d="M1 13.2H15" stroke="#d07810" stroke-width="1.2"/><path d="M8 4.5L12.3 11.8H3.7z" fill="#f5cc40"/><path d="M7.4 6h1.2v3.6h-1.2zM7.4 10.2h1.2v1h-1.2z" fill="#d89a20"/></svg><svg class="a" style="left:810px;top:353px" width="16" height="14" viewBox="0 0 16 14"><path d="M8 .8L15.3 13.2H.7z" fill="#fff" stroke="#e39a20" stroke-width="1.1" stroke-linejoin="round"/><path d="M1 13.2H15" stroke="#d07810" stroke-width="1.2"/><path d="M8 4.5L12.3 11.8H3.7z" fill="#f5cc40"/><path d="M7.4 6h1.2v3.6h-1.2zM7.4 10.2h1.2v1h-1.2z" fill="#d89a20"/></svg><svg class="a" style="left:810px;top:369px" width="16" height="14" viewBox="0 0 16 14"><path d="M8 .8L15.3 13.2H.7z" fill="#fff" stroke="#e39a20" stroke-width="1.1" stroke-linejoin="round"/><path d="M1 13.2H15" stroke="#d07810" stroke-width="1.2"/><path d="M8 4.5L12.3 11.8H3.7z" fill="#f5cc40"/><path d="M7.4 6h1.2v3.6h-1.2zM7.4 10.2h1.2v1h-1.2z" fill="#d89a20"/></svg><svg class="a" style="left:810px;top:481px" width="16" height="14" viewBox="0 0 16 14"><path d="M8 .8L15.3 13.2H.7z" fill="#fff" stroke="#e39a20" stroke-width="1.1" stroke-linejoin="round"/><path d="M1 13.2H15" stroke="#d07810" stroke-width="1.2"/><path d="M8 4.5L12.3 11.8H3.7z" fill="#f5cc40"/><path d="M7.4 6h1.2v3.6h-1.2zM7.4 10.2h1.2v1h-1.2z" fill="#d89a20"/></svg><svg class="a" style="left:810px;top:497px" width="16" height="14" viewBox="0 0 16 14"><path d="M8 .8L15.3 13.2H.7z" fill="#fff" stroke="#e39a20" stroke-width="1.1" stroke-linejoin="round"/><path d="M1 13.2H15" stroke="#d07810" stroke-width="1.2"/><path d="M8 4.5L12.3 11.8H3.7z" fill="#f5cc40"/><path d="M7.4 6h1.2v3.6h-1.2zM7.4 10.2h1.2v1h-1.2z" fill="#d89a20"/></svg><svg class="a" style="left:810px;top:513px" width="16" height="14" viewBox="0 0 16 14"><path d="M8 .8L15.3 13.2H.7z" fill="#fff" stroke="#e39a20" stroke-width="1.1" stroke-linejoin="round"/><path d="M1 13.2H15" stroke="#d07810" stroke-width="1.2"/><path d="M8 4.5L12.3 11.8H3.7z" fill="#f5cc40"/><path d="M7.4 6h1.2v3.6h-1.2zM7.4 10.2h1.2v1h-1.2z" fill="#d89a20"/></svg><svg class="a" style="left:810px;top:529px" width="16" height="14" viewBox="0 0 16 14"><path d="M8 .8L15.3 13.2H.7z" fill="#fff" stroke="#e39a20" stroke-width="1.1" stroke-linejoin="round"/><path d="M1 13.2H15" stroke="#d07810" stroke-width="1.2"/><path d="M8 4.5L12.3 11.8H3.7z" fill="#f5cc40"/><path d="M7.4 6h1.2v3.6h-1.2zM7.4 10.2h1.2v1h-1.2z" fill="#d89a20"/></svg><svg class="a" style="left:810px;top:545px" width="16" height="14" viewBox="0 0 16 14"><path d="M8 .8L15.3 13.2H.7z" fill="#fff" stroke="#e39a20" stroke-width="1.1" stroke-linejoin="round"/><path d="M1 13.2H15" stroke="#d07810" stroke-width="1.2"/><path d="M8 4.5L12.3 11.8H3.7z" fill="#f5cc40"/><path d="M7.4 6h1.2v3.6h-1.2zM7.4 10.2h1.2v1h-1.2z" fill="#d89a20"/></svg><svg class="a" style="left:810px;top:561px" width="16" height="14" viewBox="0 0 16 14"><path d="M8 .8L15.3 13.2H.7z" fill="#fff" stroke="#e39a20" stroke-width="1.1" stroke-linejoin="round"/><path d="M1 13.2H15" stroke="#d07810" stroke-width="1.2"/><path d="M8 4.5L12.3 11.8H3.7z" fill="#f5cc40"/><path d="M7.4 6h1.2v3.6h-1.2zM7.4 10.2h1.2v1h-1.2z" fill="#d89a20"/></svg><svg class="a" style="left:810px;top:577px" width="16" height="14" viewBox="0 0 16 14"><path d="M8 .8L15.3 13.2H.7z" fill="#fff" stroke="#e39a20" stroke-width="1.1" stroke-linejoin="round"/><path d="M1 13.2H15" stroke="#d07810" stroke-width="1.2"/><path d="M8 4.5L12.3 11.8H3.7z" fill="#f5cc40"/><path d="M7.4 6h1.2v3.6h-1.2zM7.4 10.2h1.2v1h-1.2z" fill="#d89a20"/></svg><svg class="a" style="left:810px;top:593px" width="16" height="14" viewBox="0 0 16 14"><path d="M8 .8L15.3 13.2H.7z" fill="#fff" stroke="#e39a20" stroke-width="1.1" stroke-linejoin="round"/><path d="M1 13.2H15" stroke="#d07810" stroke-width="1.2"/><path d="M8 4.5L12.3 11.8H3.7z" fill="#f5cc40"/><path d="M7.4 6h1.2v3.6h-1.2zM7.4 10.2h1.2v1h-1.2z" fill="#d89a20"/></svg><svg class="a" style="left:810px;top:609px" width="16" height="14" viewBox="0 0 16 14"><path d="M8 .8L15.3 13.2H.7z" fill="#fff" stroke="#e39a20" stroke-width="1.1" stroke-linejoin="round"/><path d="M1 13.2H15" stroke="#d07810" stroke-width="1.2"/><path d="M8 4.5L12.3 11.8H3.7z" fill="#f5cc40"/><path d="M7.4 6h1.2v3.6h-1.2zM7.4 10.2h1.2v1h-1.2z" fill="#d89a20"/></svg><svg class="a" style="left:810px;top:625px" width="16" height="14" viewBox="0 0 16 14"><path d="M8 .8L15.3 13.2H.7z" fill="#fff" stroke="#e39a20" stroke-width="1.1" stroke-linejoin="round"/><path d="M1 13.2H15" stroke="#d07810" stroke-width="1.2"/><path d="M8 4.5L12.3 11.8H3.7z" fill="#f5cc40"/><path d="M7.4 6h1.2v3.6h-1.2zM7.4 10.2h1.2v1h-1.2z" fill="#d89a20"/></svg><svg class="a" style="left:810px;top:641px" width="16" height="14" viewBox="0 0 16 14"><path d="M8 .8L15.3 13.2H.7z" fill="#fff" stroke="#e39a20" stroke-width="1.1" stroke-linejoin="round"/><path d="M1 13.2H15" stroke="#d07810" stroke-width="1.2"/><path d="M8 4.5L12.3 11.8H3.7z" fill="#f5cc40"/><path d="M7.4 6h1.2v3.6h-1.2zM7.4 10.2h1.2v1h-1.2z" fill="#d89a20"/></svg><svg class="a" style="left:810px;top:657px" width="16" height="14" viewBox="0 0 16 14"><path d="M8 .8L15.3 13.2H.7z" fill="#fff" stroke="#e39a20" stroke-width="1.1" stroke-linejoin="round"/><path d="M1 13.2H15" stroke="#d07810" stroke-width="1.2"/><path d="M8 4.5L12.3 11.8H3.7z" fill="#f5cc40"/><path d="M7.4 6h1.2v3.6h-1.2zM7.4 10.2h1.2v1h-1.2z" fill="#d89a20"/></svg><svg class="a" style="left:810px;top:673px" width="16" height="14" viewBox="0 0 16 14"><path d="M8 .8L15.3 13.2H.7z" fill="#fff" stroke="#e39a20" stroke-width="1.1" stroke-linejoin="round"/><path d="M1 13.2H15" stroke="#d07810" stroke-width="1.2"/><path d="M8 4.5L12.3 11.8H3.7z" fill="#f5cc40"/><path d="M7.4 6h1.2v3.6h-1.2zM7.4 10.2h1.2v1h-1.2z" fill="#d89a20"/></svg><svg class="a" style="left:810px;top:737px" width="16" height="14" viewBox="0 0 16 14"><path d="M8 .8L15.3 13.2H.7z" fill="#fff" stroke="#e39a20" stroke-width="1.1" stroke-linejoin="round"/><path d="M1 13.2H15" stroke="#d07810" stroke-width="1.2"/><path d="M8 4.5L12.3 11.8H3.7z" fill="#f5cc40"/><path d="M7.4 6h1.2v3.6h-1.2zM7.4 10.2h1.2v1h-1.2z" fill="#d89a20"/></svg><svg class="a" style="left:810px;top:849px" width="16" height="14" viewBox="0 0 16 14"><path d="M8 .8L15.3 13.2H.7z" fill="#fff" stroke="#e39a20" stroke-width="1.1" stroke-linejoin="round"/><path d="M1 13.2H15" stroke="#d07810" stroke-width="1.2"/><path d="M8 4.5L12.3 11.8H3.7z" fill="#f5cc40"/><path d="M7.4 6h1.2v3.6h-1.2zM7.4 10.2h1.2v1h-1.2z" fill="#d89a20"/></svg><svg class="a" style="left:810px;top:881px" width="16" height="14" viewBox="0 0 16 14"><path d="M8 .8L15.3 13.2H.7z" fill="#fff" stroke="#e39a20" stroke-width="1.1" stroke-linejoin="round"/><path d="M1 13.2H15" stroke="#d07810" stroke-width="1.2"/><path d="M8 4.5L12.3 11.8H3.7z" fill="#f5cc40"/><path d="M7.4 6h1.2v3.6h-1.2zM7.4 10.2h1.2v1h-1.2z" fill="#d89a20"/></svg><svg class="a" style="left:811px;top:129px" width="15" height="15" viewBox="0 0 15 15"><circle cx="7.5" cy="7.5" r="6.8" fill="#5fb64e" stroke="#3f9a35" stroke-width="1.2"/><path d="M7.5 3.8v7.4M3.8 7.5h7.4" stroke="#fff" stroke-width="2.4"/></svg><svg class="a" style="left:722px;top:102px" width="7" height="7" viewBox="0 0 7 7"><path d="M0 6L3.5 2.5L7 6" fill="none" stroke="#606060" stroke-width="1.8"/></svg><svg class="a" style="left:722px;top:955px" width="7" height="7" viewBox="0 0 7 7"><path d="M0 1L3.5 4.5L7 1" fill="none" stroke="#606060" stroke-width="1.8"/></svg><div class="a" style="left:718px;top:691px;width:15px;height:42px;background:#cdcdcd"></div><svg class="a" style="left:9px;top:971px" width="7" height="7" viewBox="0 0 7 7"><path d="M5 0L1.5 3.5L5 7" fill="none" stroke="#606060" stroke-width="1.8"/></svg><svg class="a" style="left:705px;top:971px" width="7" height="7" viewBox="0 0 7 7"><path d="M1 0L4.5 3.5L1 7" fill="none" stroke="#606060" stroke-width="1.8"/></svg><div class="a" style="left:21px;top:967px;width:173px;height:15px;background:#cdcdcd"></div><svg class="a" style="left:1460px;top:102px" width="7" height="7" viewBox="0 0 7 7"><path d="M0 6L3.5 2.5L7 6" fill="none" stroke="#606060" stroke-width="1.8"/></svg><svg class="a" style="left:1460px;top:955px" width="7" height="7" viewBox="0 0 7 7"><path d="M0 1L3.5 4.5L7 1" fill="none" stroke="#606060" stroke-width="1.8"/></svg><div class="a" style="left:1456px;top:691px;width:15px;height:42px;background:#cdcdcd"></div><svg class="a" style="left:755px;top:971px" width="7" height="7" viewBox="0 0 7 7"><path d="M5 0L1.5 3.5L5 7" fill="none" stroke="#606060" stroke-width="1.8"/></svg><svg class="a" style="left:1443px;top:971px" width="7" height="7" viewBox="0 0 7 7"><path d="M1 0L4.5 3.5L1 7" fill="none" stroke="#606060" stroke-width="1.8"/></svg><div class="a" style="left:767px;top:967px;width:168px;height:15px;background:#cdcdcd"></div><div class="a" style="left:738px;top:82px;width:9px;height:888px;background:#fff"></div><svg class="a" style="left:739px;top:83px" width="8" height="887"><defs><pattern id="dp" width="4" height="4" patternUnits="userSpaceOnUse"><rect x="0" y="1" width="2" height="2" fill="#999"/></pattern></defs><rect width="8" height="900" fill="url(#dp)"/></svg><div class="a" style="left:746px;top:69px;width:1px;height:918px;background:#fff"></div><svg class="a" style="left:739px;top:72px" width="5" height="8"><path d="M4 0v8L0 4z" fill="#000"/></svg><svg class="a" style="left:742px;top:976px" width="5" height="8"><path d="M0 0v8L4 4z" fill="#000"/></svg><div class="a" style="left:2px;top:93px;width:736px;height:1px;background:#fff"></div><div class="a" style="left:735px;top:96px;width:1px;height:887px;background:#fff"></div><div class="a" style="left:4px;top:983px;width:732px;height:2px;background:#fff"></div><div class="a" style="left:748px;top:93px;width:728px;height:1px;background:#fff"></div><div class="a" style="left:1473px;top:96px;width:1px;height:887px;background:#fff"></div><div class="a" style="left:750px;top:983px;width:724px;height:2px;background:#fff"></div><div class="a" style="left:1px;top:93px;width:1px;height:894px;background:#fff"></div><svg class="a" style="left:0;top:0" width="20" height="20" viewBox="0 0 20 20"><defs><linearGradient id="tg" x1="0" y1="0" x2="0" y2="1"><stop offset="0" stop-color="#e6ec70"/><stop offset=".6" stop-color="#5ccc30"/><stop offset="1" stop-color="#0a5a0a"/></linearGradient></defs><path d="M2.6 3.6H10.5L14.4 7.5V18.4H2.6z" fill="#fff" stroke="#555" stroke-width="1.2"/><path d="M10.5 3.6V7.5H14.4" fill="none" stroke="#555" stroke-width="1.1"/><circle cx="4.5" cy="5.3" r=".7" fill="#666"/><circle cx="6.5" cy="5.3" r=".7" fill="#666"/><circle cx="8.5" cy="5.3" r=".7" fill="#666"/><path d="M4.2 9.2h8.6v7.6h-8.6z" fill="url(#tg)"/><path d="M10 16L15.8 6" stroke="#f2a300" stroke-width="2.4"/><path d="M15.8 6L16.8 4.3" stroke="#7a9ad0" stroke-width="1.6"/><path d="M16 3h2v2h-2z" fill="#8a0000"/></svg><div class="a" style="left:1559px;top:10px;width:10px;height:1px;background:#000"></div><svg class="a" style="left:1604px;top:4px" width="12" height="12"><path d="M.5 3.5h7v7h-7z M2.5 3.5v-2h7v7h-2" fill="none" stroke="#000"/></svg><svg class="a" style="left:1649px;top:4px" width="12" height="12"><path d="M1 1l10 10M11 1l-10 10" stroke="#000" stroke-width="1.1"/></svg><div class="a" style="left:1665px;top:71px;width:12px;height:12px;background:#ece9d8;border-top:1px solid #fff;border-left:1px solid #fff;border-right:1px solid #716f64;border-bottom:1px solid #716f64"></div><svg class="a" style="left:1668px;top:74px" width="7" height="6"><path d="M.5 .5l6 5M6.5 .5l-6 5" stroke="#555" stroke-width="1.4"/></svg><div class="a" style="left:939px;top:990px;width:1px;height:20px;background:#d7d7d7"></div><div class="a" style="left:1139px;top:990px;width:1px;height:20px;background:#d7d7d7"></div><div class="a" style="left:1399px;top:990px;width:1px;height:20px;background:#d7d7d7"></div><div class="a" style="left:1509px;top:990px;width:1px;height:20px;background:#d7d7d7"></div><div class="a" style="left:1629px;top:990px;width:1px;height:20px;background:#d7d7d7"></div><div class="a" style="left:1660px;top:990px;width:1px;height:20px;background:#d7d7d7"></div>
<!-- green annotation -->
<div class="a" style="left:49px;top:470px;width:1450px;height:192px;border:4px solid #00a651;border-radius:2px"></div>
</body></html>
